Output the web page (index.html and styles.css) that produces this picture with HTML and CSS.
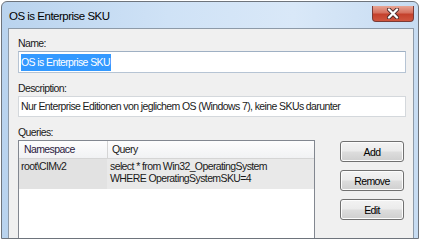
FILE: index.html
```html
<!DOCTYPE html>
<html lang="en">
<head>
  <meta charset="UTF-8">
  <title>OS is Enterprise SKU</title>
  <link rel="stylesheet" href="styles.css">
</head>
<body>

  <div class="window">
    <div class="titlebar">
      <span class="title">OS is Enterprise SKU</span>
      <span class="close-btn">
        <svg width="14" height="11" viewBox="0 0 14 11">
          <path d="M3 1.5 L11 9.5 M11 1.5 L3 9.5" stroke="#4a2a2a" stroke-width="4" stroke-linecap="round"/>
          <path d="M3 1.5 L11 9.5 M11 1.5 L3 9.5" stroke="#fff" stroke-width="2.4" stroke-linecap="round"/>
        </svg>
      </span>
    </div>

    <div class="client">
      <label class="field-label">Name:</label>
      <div class="textbox name-box"><span class="selected">OS is Enterprise SKU</span></div>

      <label class="field-label">Description:</label>
      <div class="textbox desc-box">Nur Enterprise Editionen von jeglichem OS (Windows 7), keine SKUs darunter</div>

      <label class="field-label">Queries:</label>
      <div class="queries">
        <div class="listview">
          <div class="lv-header">
            <div class="col-ns">Namespace</div>
            <div class="col-q">Query</div>
          </div>
          <div class="lv-row">
            <div class="col-ns">root\CIMv2</div>
            <div class="col-q">select * from Win32_OperatingSystem<br>WHERE OperatingSystemSKU=4</div>
          </div>
        </div>

        <div class="buttons">
          <button class="btn">Add</button>
          <button class="btn">Remove</button>
          <button class="btn">Edit</button>
        </div>
      </div>
    </div>
  </div>

</body>
</html>
```

FILE: styles.css
```css
* {
  box-sizing: border-box;
}

body {
  margin: 0;
  background-color: #fff;
  font-family: "Liberation Sans", Arial, sans-serif;
  font-size: 10.5px;
  letter-spacing: -0.6px;
  color: #1a1a1a;
}

.window {
  width: 418px;
  height: 238px;
  margin: 1px 0 0 1px;
  padding: 0 4px 0 6px;
  border: 1px solid #6e747c;
  border-radius: 6px 6px 0 0;
  background: linear-gradient(to right, #b9d3ee, #cfe2f6 40%, #d9e8f8 70%, #c7dcf2);
  display: flex;
  flex-direction: column;
}

.titlebar {
  height: 26px;
  flex-shrink: 0;
  display: flex;
  align-items: flex-start;
  justify-content: space-between;
}

.title {
  font-size: 11.5px;
  letter-spacing: -0.5px;
  margin: 8px 0 0 1px;
  color: #000;
}

.close-btn {
  width: 42px;
  height: 16px;
  margin-top: 4px;
  border: 1px solid #7a3b36;
  border-top: none;
  border-radius: 0 0 4px 4px;
  background: linear-gradient(#e8a595, #d6715f 45%, #c4412c 55%, #d0563f);
  display: flex;
  align-items: center;
  justify-content: center;
}

.client {
  flex: 1;
  border: 1px solid #8d9aa8;
  border-bottom: none;
  background-color: #f0f0f0;
  padding: 8px 7px 0 9px;
  overflow: hidden;
}

.field-label {
  display: block;
  height: 13px;
  line-height: 13px;
  color: #1a1a1a;
}

.textbox {
  height: 22px;
  margin: 1px 0 9px 0;
  border: 1px solid #b6c4d4;
  border-top-color: #9fb0c3;
  background-color: #fff;
  padding: 0 2px;
  line-height: 20px;
  white-space: nowrap;
}

.desc-box {
  height: 21px;
  line-height: 19px;
  border-color: #d4d8dc;
  margin-bottom: 9px;
}

.selected {
  background-color: #3399ff;
  color: #fff;
  display: inline-block;
  line-height: 17px;
  padding-right: 1px;
}

.queries {
  display: flex;
  align-items: flex-start;
  margin-top: 1px;
}

.listview {
  width: 297px;
  height: 112px;
  flex-shrink: 0;
  border: 1px solid #828790;
  background-color: #fff;
}

.lv-header {
  display: flex;
  height: 18px;
  line-height: 16px;
  background: linear-gradient(#fdfdfd, #f1f2f4);
  border-bottom: 1px solid #d5d5d5;
}

.lv-header .col-ns {
  padding-left: 5px;
  color: #2a2040;
}

.lv-header .col-q {
  border-left: 1px solid #d5d5d5;
  padding-left: 4px;
}

.col-ns {
  width: 88px;
  padding-left: 2px;
}

.col-q {
  flex: 1;
  padding-left: 3px;
}

.lv-row {
  display: flex;
  height: 30px;
  line-height: 12px;
  background-color: #e6e6e6;
}

.lv-row .col-ns {
  padding-top: 1px;
  background-color: #e2e2e2;
  padding-left: 2px;
}

.lv-row .col-q {
  padding-top: 1px;
  background-color: #e9e9e9;
}

.buttons {
  display: flex;
  flex-direction: column;
  gap: 8px;
  margin: 1px 0 0 25px;
}

.btn {
  width: 64px;
  height: 21px;
  border: 1px solid #707070;
  border-radius: 3px;
  background: linear-gradient(#f3f3f3, #ebebeb 48%, #dddddd 52%, #cfcfcf);
  box-shadow: inset 0 0 0 1px #fcfcfc;
  font-family: "Liberation Sans", Arial, sans-serif;
  font-size: 10.5px;
  letter-spacing: -0.6px;
  color: #000;
  padding: 0;
}
```
